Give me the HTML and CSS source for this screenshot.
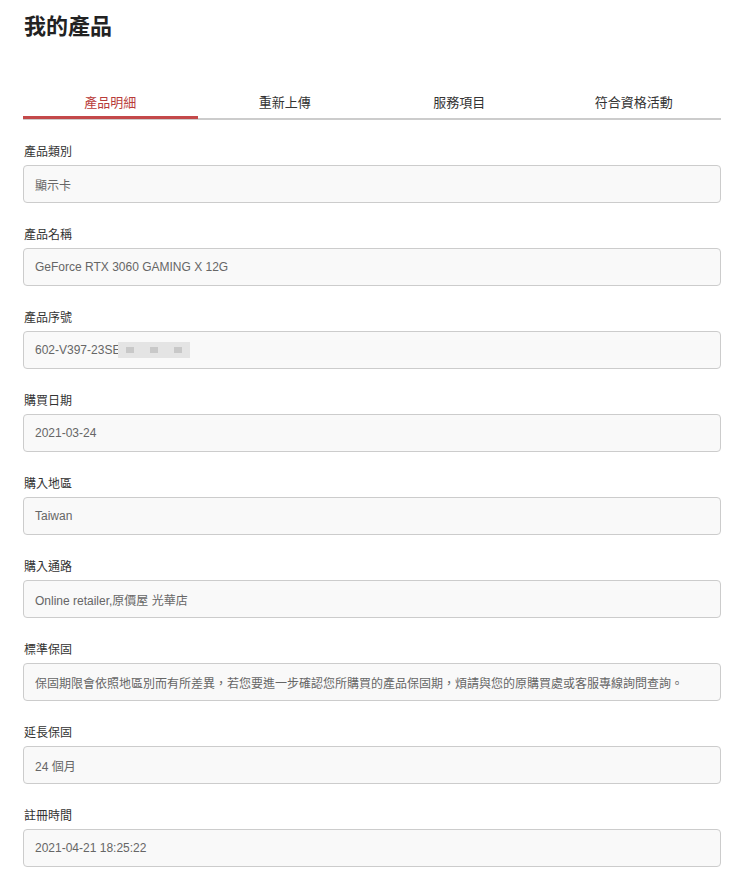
FILE: index.html
```html
<!DOCTYPE html>
<html lang="zh-Hant">
<head>
  <meta charset="UTF-8">
  <title>我的產品</title>
  <link rel="stylesheet" href="styles.css">
</head>
<body>
  <div class="page">
    <h1>我的產品</h1>

    <!-- Zakładki -->
    <div class="tabs">
      <div class="tab active">產品明細</div>
      <div class="tab">重新上傳</div>
      <div class="tab">服務項目</div>
      <div class="tab">符合資格活動</div>
    </div>

    <!-- Szczegóły produktu -->
    <div class="field">
      <label>產品類別</label>
      <div class="box">顯示卡</div>
    </div>
    <div class="field">
      <label>產品名稱</label>
      <div class="box">GeForce RTX 3060 GAMING X 12G</div>
    </div>
    <div class="field">
      <label>產品序號</label>
      <div class="box">602-V397-23SE<span class="mosaic"><i></i><b></b><i></i><i></i><b></b><i></i><i></i><b></b><i></i></span></div>
    </div>
    <div class="field">
      <label>購買日期</label>
      <div class="box">2021-03-24</div>
    </div>
    <div class="field">
      <label>購入地區</label>
      <div class="box">Taiwan</div>
    </div>
    <div class="field">
      <label>購入通路</label>
      <div class="box">Online retailer,原價屋 光華店</div>
    </div>
    <div class="field">
      <label>標準保固</label>
      <div class="box">保固期限會依照地區別而有所差異，若您要進一步確認您所購買的產品保固期，煩請與您的原購買處或客服專線詢問查詢。</div>
    </div>
    <div class="field">
      <label>延長保固</label>
      <div class="box">24 個月</div>
    </div>
    <div class="field">
      <label>註冊時間</label>
      <div class="box">2021-04-21 18:25:22</div>
    </div>
  </div>
</body>
</html>
```

FILE: styles.css
```css
body {
  margin: 0;
  background-color: #fff;
  font-family: "Liberation Sans", "Noto Sans CJK TC", sans-serif;
  color: #333;
}
.page {
  padding: 12px 19px 0 23px;
}
h1 {
  margin: 0 0 0 1px;
  font-size: 22px;
  line-height: 30px;
  font-weight: bold;
  color: #222;
}

/* Zakładki */
.tabs {
  display: flex;
  margin-top: 51px;
  margin-bottom: 24px;
  border-bottom: 2px solid #ccc;
}
.tab {
  flex: 1;
  text-align: center;
  font-size: 13px;
  line-height: 20px;
  padding-bottom: 3px;
  margin-bottom: -1px;
  border-bottom: 3px solid transparent;
  color: #333;
}
.tab.active {
  color: #b83b3a;
  border-bottom-color: #c4494a;
}

/* Pola */
.field {
  margin-bottom: 24px;
}
.field label {
  display: block;
  font-size: 12px;
  line-height: 17px;
  margin: 0 0 4px 1px;
  color: #333;
}
.box {
  display: flex;
  align-items: center;
  box-sizing: border-box;
  height: 38px;
  padding: 0 11px;
  background-color: #f9f9f9;
  border: 1px solid #ccc;
  border-radius: 4px;
  font-size: 12px;
  color: #666;
  white-space: nowrap;
  overflow: hidden;
}
.mosaic {
  display: inline-flex;
  height: 16px;
  margin-left: -2px;
  background-color: #e4e4e4;
}
.mosaic i,
.mosaic b {
  display: block;
  width: 8px;
  height: 16px;
}
.mosaic b {
  background: linear-gradient(#e4e4e4 5px, #c8c8c8 5px, #c8c8c8 11px, #e4e4e4 11px);
}
```
